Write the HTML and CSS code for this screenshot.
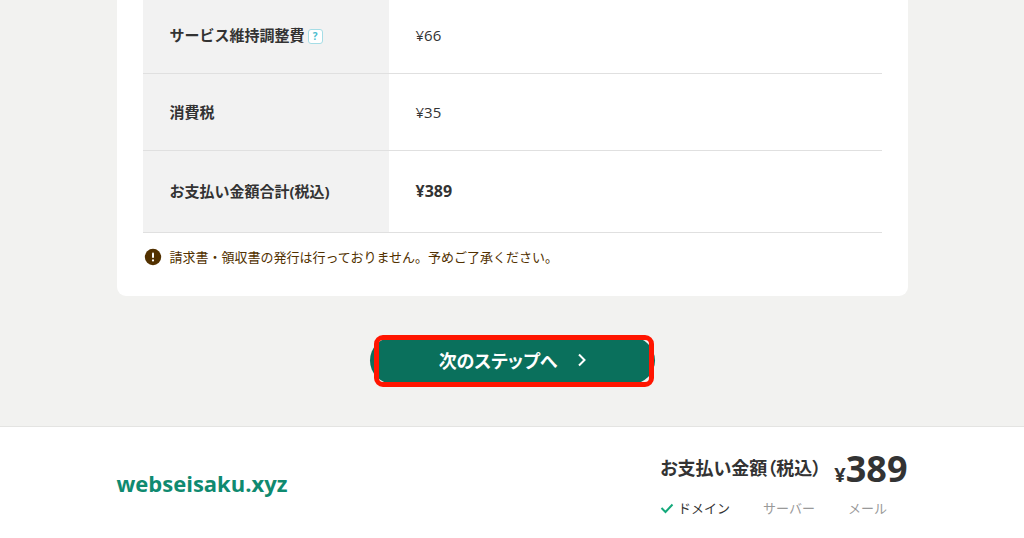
FILE: index.html
```html
<!DOCTYPE html>
<html lang="ja">
<head>
  <meta charset="UTF-8">
  <meta name="viewport" content="width=device-width, initial-scale=1.0">
  <title>お申し込み内容の確認</title>
  <link rel="stylesheet" href="styles.css">
</head>
<body>
  <main>
    <section class="card">
      <table class="price-table">
        <tr>
          <th scope="row">サービス維持調整費<button type="button" class="help">?</button></th>
          <td>¥66</td>
        </tr>
        <tr>
          <th scope="row">消費税</th>
          <td>¥35</td>
        </tr>
        <tr class="total">
          <th scope="row">お支払い金額合計(税込)</th>
          <td>¥389</td>
        </tr>
      </table>
      <p class="notice">
        <svg class="notice-icon" viewBox="0 0 18 18" aria-hidden="true">
          <circle cx="9" cy="9" r="8.2" fill="#523100"/>
          <path d="M9 5.500v3.500" stroke="#fff" stroke-width="2" stroke-linecap="round"/>
          <circle cx="9" cy="12.400" r="1.1" fill="#fff"/>
        </svg>
        請求書・領収書の発行は行っておりません。予めご了承ください。
      </p>
    </section>

    <div class="actions">
      <div class="next-wrap">
        <button type="button" class="next-btn">
          次のステップへ
          <svg class="arrow" viewBox="0 0 10 14" aria-hidden="true">
            <path d="M2 1.500l5.500 5.500L2 12.500" fill="none" stroke="#fff" stroke-width="2"/>
          </svg>
        </button>
        <span class="marker"></span>
      </div>
    </div>
  </main>

  <footer class="summary">
    <div class="summary-inner">
      <p class="domain">webseisaku.xyz</p>
      <div class="payment">
        <p class="amount">
          <span class="amount-label">お支払い金額（税込）</span>
          <span class="price"><span class="yen">¥</span>389</span>
        </p>
        <ul class="services">
          <li class="active">
            <svg class="check" viewBox="0 0 14 12" aria-hidden="true">
              <path d="M1.500 6l4 4L12.500 2.500" fill="none" stroke="#14a97b" stroke-width="2"/>
            </svg>
            ドメイン
          </li>
          <li>サーバー</li>
          <li>メール</li>
        </ul>
      </div>
    </div>
  </footer>
</body>
</html>
```
FILE: styles.css
```css
* {
  box-sizing: border-box;
}

body {
  margin: 0;
  min-height: 100vh;
  display: flex;
  flex-direction: column;
  font-family: "Open Sans", "Noto Sans CJK JP", sans-serif;
  font-size: 15px;
  line-height: 24px;
  color: #333;
  background: #f2f2f0;
}

p,
ul {
  margin: 0;
  padding: 0;
}

button {
  font-family: inherit;
  cursor: pointer;
}

.card {
  max-width: 791px;
  margin: 0 auto;
  padding: 0 26px 27px;
  background: #fff;
  border-radius: 0 0 9px 9px;
}

/* Price breakdown */
.price-table {
  width: 100%;
  border-collapse: separate;
  border-spacing: 0;
}

.price-table th,
.price-table td {
  padding: 26px 27px;
  border-bottom: 1px solid #e0e0e0;
  text-align: left;
}

.price-table tr:first-child th,
.price-table tr:first-child td {
  padding-top: 23px;
}

.price-table th {
  width: 246px;
  padding-right: 0;
  background: #f2f2f2;
  white-space: nowrap;
}

.price-table .total th,
.price-table .total td {
  padding-top: 28px;
  padding-bottom: 29px;
}

.price-table .total td {
  font-size: 16px;
  font-weight: bold;
}

.help {
  width: 15px;
  height: 15px;
  margin-left: 3px;
  padding: 0;
  border: 1px solid #a5dde6;
  border-radius: 3px;
  background: #fff;
  color: #4dbccd;
  font-size: 10px;
  font-weight: bold;
  line-height: 13px;
  vertical-align: middle;
}

.notice {
  display: flex;
  align-items: center;
  gap: 8px;
  padding: 12px 0 0 1px;
  font-size: 13px;
  color: #523100;
}

.notice-icon {
  width: 18px;
  height: 18px;
  flex-shrink: 0;
}

/* Next step */
.actions {
  display: flex;
  justify-content: center;
  padding: 41px 16px 42px;
}

.next-wrap {
  position: relative;
}

.next-btn {
  display: flex;
  align-items: center;
  justify-content: center;
  gap: 20px;
  width: 285px;
  height: 47px;
  padding: 0 0 2px 2px;
  border: none;
  border-radius: 24px;
  background: #0a705c;
  color: #fff;
  font-size: 18px;
  font-weight: bold;
  font-feature-settings: "palt";
}

.arrow {
  width: 10px;
  height: 14px;
}

.marker {
  position: absolute;
  inset: -2px 1px -3px 4px;
  border: 5px solid #ff1500;
  border-radius: 9px;
  pointer-events: none;
}

/* Bottom bar */
.summary {
  flex: 1;
  padding: 0 16px;
  border-top: 1px solid #e4e4e2;
  background: #fff;
}

.summary-inner {
  display: flex;
  align-items: center;
  justify-content: space-between;
  max-width: 791px;
  margin: 0 auto;
  padding: 20px 0;
}

.domain {
  padding-bottom: 2px;
  font-size: 22px;
  font-weight: bold;
  line-height: 32px;
  color: #0f8a70;
}

.amount {
  display: flex;
  align-items: flex-start;
  font-weight: bold;
  line-height: 44px;
}

.amount-label {
  margin-right: 13px;
  font-size: 18px;
  line-height: 42px;
  font-feature-settings: "palt";
}

.price {
  font-size: 36px;
}

.yen {
  font-size: 20px;
  line-height: 1;
}

.services {
  display: flex;
  gap: 33px;
  padding-top: 5px;
  list-style: none;
  font-size: 13px;
  color: #999;
}

.services li {
  display: flex;
  align-items: center;
  gap: 4px;
}

.services .active {
  color: #333;
}

.check {
  width: 14px;
  height: 12px;
}
```
